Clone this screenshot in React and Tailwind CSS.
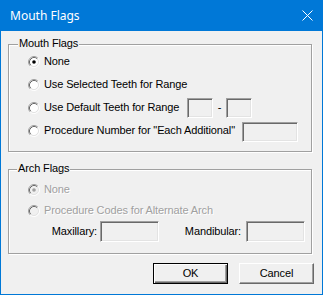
import React from "react";

function Radio({ checked, disabled }) {
  return (
    <svg width="12" height="12" viewBox="0 0 12 12" className="shrink-0">
      <circle cx="6" cy="6" r="4.2" fill={disabled ? "#f0f0f0" : "#ffffff"} />
      <path d="M2.11 9.89 A5.5 5.5 0 0 1 9.89 2.11" stroke="#a0a0a0" strokeWidth="1" fill="none" />
      <path d="M9.89 2.11 A5.5 5.5 0 0 1 2.11 9.89" stroke="#ffffff" strokeWidth="1" fill="none" />
      <path d="M2.82 9.18 A4.5 4.5 0 0 1 9.18 2.82" stroke="#696969" strokeWidth="1" fill="none" />
      <path d="M9.18 2.82 A4.5 4.5 0 0 1 2.82 9.18" stroke="#e3e3e3" strokeWidth="1" fill="none" />
      {checked && <circle cx="6" cy="6" r="1.8" fill={disabled ? "#a0a0a0" : "#000000"} />}
    </svg>
  );
}

function Box({ w, h = "h-[20px]", extra = "" }) {
  return (
    <div
      className={`${w} ${h} ${extra} shrink-0 bg-[#f0f0f0] border border-t-[#a0a0a0] border-l-[#a0a0a0] border-b-white border-r-white shadow-[inset_1px_1px_0_#696969,inset_-1px_-1px_0_#e3e3e3]`}
    />
  );
}

function RadioRow({ label, checked, disabled, children, h = "h-[23px]", labelW = "" }) {
  return (
    <div className={`flex items-center ${h}`}>
      <div className="w-[19px] shrink-0" />
      <Radio checked={checked} disabled={disabled} />
      <span
        className={`ml-[4px] whitespace-nowrap shrink-0 ${labelW} ${
          disabled ? "text-[#a0a0a0] [text-shadow:1px_1px_0_#ffffff]" : "text-black"
        }`}
      >
        {label}
      </span>
      {children}
    </div>
  );
}

export default function App() {
  return (
    <div className="w-[323px] h-[295px] bg-[#0078d7] flex flex-col text-[11px] leading-none tracking-[-0.12px] font-['Liberation_Sans',Arial,sans-serif]">
      <div className="h-[31px] flex items-center justify-between pl-[10px] pr-[10px] shrink-0">
        <span className="text-white text-[12px] tracking-normal font-['Noto_Sans','Open_Sans',sans-serif]">Mouth Flags</span>
        <svg width="11" height="11" viewBox="0 0 11 11">
          <path d="M0.5 0.5 L10.5 10.5 M10.5 0.5 L0.5 10.5" stroke="#ffffff" strokeWidth="1" />
        </svg>
      </div>
      <div className="mx-[1px] mb-[1px] flex-1 bg-[#f0f0f0] flex flex-col pl-[7px]">
        <div className="relative mt-[13px] w-[304px] h-[108px] border border-[#a0a0a0] shadow-[inset_1px_1px_0_#ffffff,1px_1px_0_#ffffff] flex flex-col pt-[5px]">
          <span className="absolute left-[9px] top-[-7px] bg-[#f0f0f0] px-[1px] text-black">Mouth Flags</span>
          <RadioRow label="None" checked />
          <RadioRow label="Use Selected Teeth for Range" />
          <RadioRow label="Use Default Teeth for Range" labelW="w-[143px]">
            <Box w="w-[26px]" />
            <span className="w-[13px] text-center">-</span>
            <Box w="w-[26px]" />
          </RadioRow>
          <RadioRow label={'Procedure Number for "Each Additional"'} labelW="w-[198px]">
            <Box w="w-[56px]" extra="mt-[3px]" />
          </RadioRow>
        </div>

        <div className="relative mt-[17px] w-[304px] h-[85px] border border-[#a0a0a0] shadow-[inset_1px_1px_0_#ffffff,1px_1px_0_#ffffff] flex flex-col pt-[9px]">
          <span className="absolute left-[8px] top-[-7px] bg-[#f0f0f0] px-[1px] text-black">Arch Flags</span>
          <RadioRow label="None" checked disabled h="h-[21px]" />
          <RadioRow label="Procedure Codes for Alternate Arch" disabled h="h-[21px]" />
          <div className="flex items-center h-[21px]">
            <span className="w-[88px] text-right text-black">Maxillary:</span>
            <div className="w-[3px]" />
            <Box w="w-[59px]" h="h-[21px]" />
            <span className="w-[82px] text-right text-black">Mandibular:</span>
            <div className="w-[5px]" />
            <Box w="w-[59px]" h="h-[21px]" />
          </div>
        </div>

        <div className="mt-[9px] flex gap-[11px] pl-[145px]">
          <button className="w-[75px] h-[21px] bg-[#f0f0f0] border border-[#000000] shadow-[inset_1px_1px_0_#ffffff,inset_-1px_-1px_0_#696969,inset_-2px_-2px_0_#a0a0a0] text-black text-[11px] font-['Liberation_Sans',Arial,sans-serif]">
            OK
          </button>
          <button className="w-[75px] h-[21px] bg-[#f0f0f0] border border-t-white border-l-white border-b-[#696969] border-r-[#696969] shadow-[inset_-1px_-1px_0_#a0a0a0] text-black text-[11px] font-['Liberation_Sans',Arial,sans-serif]">
            Cancel
          </button>
        </div>
      </div>
    </div>
  );
}
